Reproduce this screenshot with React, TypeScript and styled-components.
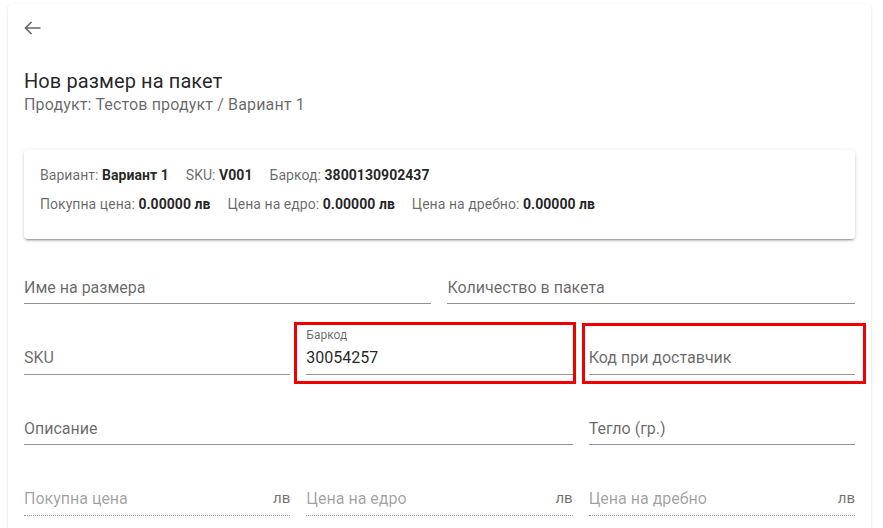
import React from "react";
import styled, { createGlobalStyle } from "styled-components";

const GlobalStyle = createGlobalStyle`
  html, body { margin: 0; padding: 0; background: #ffffff; }
  body {
    font-family: Roboto, "Noto Sans", "Liberation Sans", sans-serif;
    color: rgba(0, 0, 0, 0.87);
    overflow: hidden;
  }
  * { box-sizing: border-box; }
`;

const Page = styled.div`
  padding: 4px 12px 0 8px;
`;

const Card = styled.div`
  background: #fff;
  border-radius: 4px;
  box-shadow: 0 2px 1px -1px rgba(0, 0, 0, 0.2), 0 1px 1px 0 rgba(0, 0, 0, 0.14),
    0 1px 3px 0 rgba(0, 0, 0, 0.12);
  padding: 16px 16px 40px;
  min-height: 620px;
`;

const BackButton = styled.button`
  display: flex;
  align-items: flex-start;
  width: 24px;
  height: 24px;
  padding: 1px 0 0 0;
  margin: 0;
  border: 0;
  background: transparent;
  color: #6a6a6a;
  cursor: pointer;
`;

const Header = styled.div`
  display: flex;
  flex-direction: column;
  margin-top: 24px;
`;

const Title = styled.h1`
  margin: 0;
  font-size: 20px;
  line-height: 26px;
  font-weight: 400;
  letter-spacing: 0.1px;
  color: rgba(0, 0, 0, 0.87);
`;

const Subtitle = styled.div`
  font-size: 16px;
  line-height: 22px;
  letter-spacing: 0.15px;
  color: rgba(0, 0, 0, 0.6);
`;

const InfoCard = styled.div`
  margin-top: 34px;
  border-radius: 4px;
  background: #fff;
  box-shadow: 0 3px 1px -2px rgba(0, 0, 0, 0.2), 0 2px 2px 0 rgba(0, 0, 0, 0.14),
    0 1px 5px 0 rgba(0, 0, 0, 0.12);
  padding: 15px 16px 25px;
  display: flex;
  flex-direction: column;
  gap: 9px;
`;

const InfoRow = styled.div`
  display: flex;
  gap: 17px;
  font-size: 14px;
  line-height: 20px;
  letter-spacing: 0.05px;
`;

const InfoItem = styled.span`
  color: rgba(0, 0, 0, 0.6);
`;

const InfoValue = styled.strong`
  color: rgba(0, 0, 0, 0.87);
  font-weight: 700;
`;

const FormGrid = styled.div`
  margin-top: 17px;
  display: grid;
  grid-template-columns: repeat(12, minmax(0, 1fr));
  column-gap: 16px;
  row-gap: 22.5px;
`;

const Cell = styled.div<{ $span: number }>`
  grid-column: span ${(p) => p.$span};
  position: relative;
`;

const Field = styled.div`
  display: flex;
  flex-direction: column;
`;

const Caption = styled.div`
  height: 16px;
  font-size: 12px;
  line-height: 16px;
  color: rgba(0, 0, 0, 0.6);
`;

const InputRow = styled.div<{ $disabled?: boolean }>`
  display: flex;
  align-items: center;
  height: 32px;
  padding-bottom: 1px;
  border-bottom: 1px ${(p) => (p.$disabled ? "dotted" : "solid")} rgba(0, 0, 0, 0.42);
`;

const Placeholder = styled.span<{ $disabled?: boolean }>`
  flex: 1;
  font-size: 16px;
  line-height: 23px;
  color: ${(p) => (p.$disabled ? "rgba(0, 0, 0, 0.38)" : "rgba(0, 0, 0, 0.6)")};
  white-space: nowrap;
`;

const Value = styled.span`
  flex: 1;
  font-size: 16px;
  line-height: 23px;
  color: rgba(0, 0, 0, 0.87);
`;

const Adornment = styled.span`
  font-size: 15px;
  line-height: 23px;
  color: rgba(0, 0, 0, 0.58);
  margin-left: 8px;
`;

const Highlight = styled.span<{ $t: number; $r: number; $b: number; $l: number }>`
  position: absolute;
  top: ${(p) => p.$t}px;
  right: ${(p) => p.$r}px;
  bottom: ${(p) => p.$b}px;
  left: ${(p) => p.$l}px;
  border: 3px solid #ee0000;
  pointer-events: none;
`;

const ArrowIcon = () => (
  <svg width="17" height="14" viewBox="0 0 17 14" fill="none">
    <path
      d="M16.5 7H1.5M7.5 1L1.5 7l6 6"
      stroke="currentColor"
      strokeWidth="1.7"
      strokeLinecap="butt"
      strokeLinejoin="miter"
    />
  </svg>
);

type FieldProps = {
  label: string;
  value?: string;
  disabled?: boolean;
  adornment?: string;
};

const TextField = ({ label, value, disabled, adornment }: FieldProps) => (
  <Field>
    <Caption>{value ? label : ""}</Caption>
    <InputRow $disabled={disabled}>
      {value ? (
        <Value>{value}</Value>
      ) : (
        <Placeholder $disabled={disabled}>{label}</Placeholder>
      )}
      {adornment && <Adornment>{adornment}</Adornment>}
    </InputRow>
  </Field>
);

export default function App() {
  return (
    <>
      <GlobalStyle />
      <Page>
        <Card>
          <BackButton aria-label="Назад">
            <ArrowIcon />
          </BackButton>
          <Header>
            <Title>Нов размер на пакет</Title>
            <Subtitle>Продукт: Тестов продукт / Вариант 1</Subtitle>
          </Header>

          <InfoCard>
            <InfoRow>
              <InfoItem>
                Вариант: <InfoValue>Вариант 1</InfoValue>
              </InfoItem>
              <InfoItem>
                SKU: <InfoValue>V001</InfoValue>
              </InfoItem>
              <InfoItem>
                Баркод: <InfoValue>3800130902437</InfoValue>
              </InfoItem>
            </InfoRow>
            <InfoRow>
              <InfoItem>
                Покупна цена: <InfoValue>0.00000 лв</InfoValue>
              </InfoItem>
              <InfoItem>
                Цена на едро: <InfoValue>0.00000 лв</InfoValue>
              </InfoItem>
              <InfoItem>
                Цена на дребно: <InfoValue>0.00000 лв</InfoValue>
              </InfoItem>
            </InfoRow>
          </InfoCard>

          <FormGrid>
            <Cell $span={6}>
              <TextField label="Име на размера" />
            </Cell>
            <Cell $span={6}>
              <TextField label="Количество в пакета" />
            </Cell>

            <Cell $span={4}>
              <TextField label="SKU" />
            </Cell>
            <Cell $span={4}>
              <TextField label="Баркод" value="30054257" />
              <Highlight $t={-5} $r={-3} $b={-9} $l={-12} />
            </Cell>
            <Cell $span={4}>
              <TextField label="Код при доставчик" />
              <Highlight $t={-4} $r={-11} $b={-9} $l={-7} />
            </Cell>

            <Cell $span={8}>
              <TextField label="Описание" />
            </Cell>
            <Cell $span={4}>
              <TextField label="Тегло (гр.)" />
            </Cell>

            <Cell $span={4}>
              <TextField label="Покупна цена" disabled adornment="лв" />
            </Cell>
            <Cell $span={4}>
              <TextField label="Цена на едро" disabled adornment="лв" />
            </Cell>
            <Cell $span={4}>
              <TextField label="Цена на дребно" disabled adornment="лв" />
            </Cell>
          </FormGrid>
        </Card>
      </Page>
    </>
  );
}
